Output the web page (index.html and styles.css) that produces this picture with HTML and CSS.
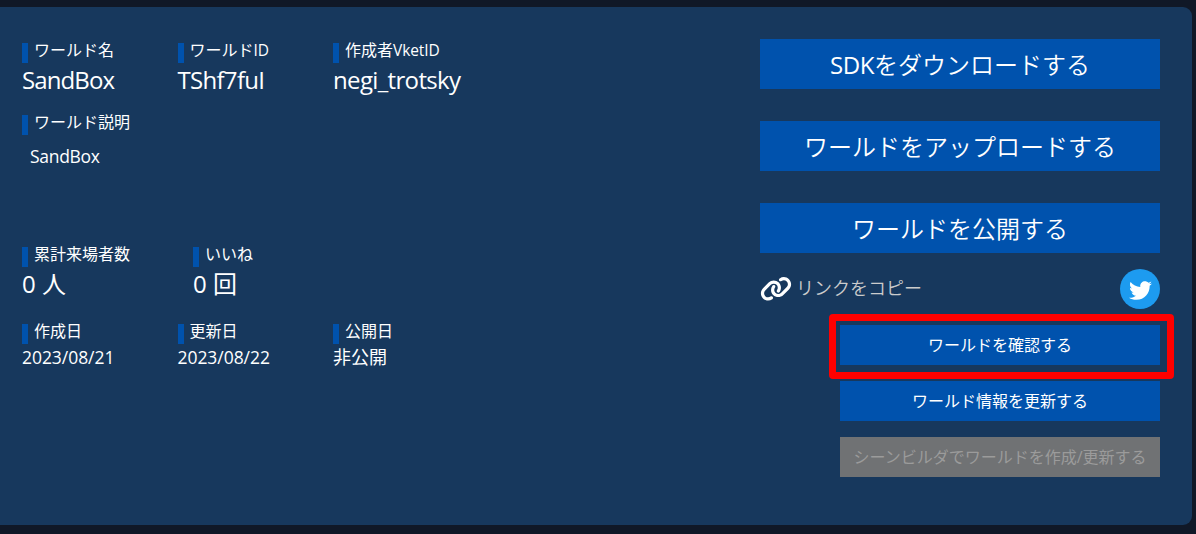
FILE: index.html
```html
<!DOCTYPE html>
<html lang="ja">
<head>
<meta charset="utf-8">
<title>SandBox</title>
<link rel="stylesheet" href="styles.css">
</head>
<body>
<main class="panel">
  <section class="info">
    <div class="row row-names">
      <div class="field"><h2 class="label">ワールド名</h2><p class="value name-value">SandBox</p></div>
      <div class="field"><h2 class="label">ワールド<span class="latin">ID</span></h2><p class="value id-value">TShf7fuI</p></div>
      <div class="field"><h2 class="label">作成者<span class="latin">VketID</span></h2><p class="value author-value">negi_trotsky</p></div>
    </div>
    <div class="row row-description">
      <div class="field"><h2 class="label">ワールド説明</h2><p class="description">SandBox</p></div>
    </div>
    <div class="row row-counts">
      <div class="field"><h2 class="label">累計来場者数</h2><p class="value count">0 人</p></div>
      <div class="field"><h2 class="label">いいね</h2><p class="value count">0 回</p></div>
    </div>
    <div class="row row-dates">
      <div class="field"><h2 class="label">作成日</h2><p class="date">2023/08/21</p></div>
      <div class="field"><h2 class="label">更新日</h2><p class="date">2023/08/22</p></div>
      <div class="field"><h2 class="label">公開日</h2><p class="date unpublished">非公開</p></div>
    </div>
  </section>
  <section class="actions">
    <button class="btn btn-large"><span class="sdk">SDK</span>をダウンロードする</button>
    <button class="btn btn-large">ワールドをアップロードする</button>
    <button class="btn btn-large">ワールドを公開する</button>
    <div class="share">
      <a class="copy">
        <svg class="link-icon" viewBox="0 0 640 512"><path fill="currentColor" d="M579.8 267.7c56.5-56.5 56.5-148 0-204.5c-50-50-128.8-56.5-186.3-15.4l-1.6 1.1c-14.4 10.3-17.7 30.3-7.4 44.6s30.3 17.7 44.6 7.4l1.6-1.1c32.1-22.9 76-19.3 103.8 8.6c31.5 31.5 31.5 82.5 0 114L422.3 334.8c-31.5 31.5-82.5 31.5-114 0c-27.9-27.9-31.5-71.8-8.6-103.8l1.1-1.6c10.3-14.4 6.9-34.4-7.4-44.6s-34.4-6.9-44.6 7.4l-1.1 1.6C206.5 251.2 213 330 263 380c56.5 56.5 148 56.5 204.5 0L579.8 267.7zM60.2 244.3c-56.5 56.5-56.5 148 0 204.5c50 50 128.8 56.5 186.3 15.4l1.6-1.1c14.4-10.3 17.7-30.3 7.4-44.6s-30.3-17.7-44.6-7.4l-1.6 1.1c-32.1 22.9-76 19.3-103.8-8.6C74 372 74 321 105.5 289.5L217.7 177.2c31.5-31.5 82.5-31.5 114 0c27.9 27.9 31.5 71.8 8.6 103.9l-1.1 1.6c-10.3 14.4-6.9 34.4 7.4 44.6s34.4 6.9 44.6-7.4l1.1-1.6C433.5 260.8 427 182 377 132c-56.5-56.5-148-56.5-204.5 0L60.2 244.3z"/></svg>
        <span>リンクをコピー</span>
      </a>
      <a class="twitter">
        <svg class="twitter-icon" viewBox="0 0 512 512"><path fill="currentColor" d="M459.37 151.716c.325 4.548.325 9.097.325 13.645 0 138.72-105.583 298.558-298.558 298.558-59.452 0-114.68-17.219-161.137-47.106 8.447.974 16.568 1.299 25.34 1.299 49.055 0 94.213-16.568 130.274-44.832-46.132-.975-84.792-31.188-98.112-72.772 6.498.974 12.995 1.624 19.818 1.624 9.421 0 18.843-1.3 27.614-3.573-48.081-9.747-84.143-51.98-84.143-102.985v-1.299c13.969 7.797 30.214 12.67 47.431 13.319-28.264-18.843-46.781-51.005-46.781-87.391 0-19.492 5.197-37.36 14.294-52.954 51.655 63.675 129.3 105.258 216.365 109.807-1.624-7.797-2.599-15.918-2.599-24.04 0-57.828 46.782-104.934 104.934-104.934 30.213 0 57.502 12.67 76.67 33.137 23.715-4.548 46.456-13.32 66.599-25.34-7.798 24.366-24.366 44.833-46.132 57.827 21.117-2.273 41.584-8.122 60.426-16.243-14.292 20.791-32.161 39.308-52.628 54.253z"/></svg>
      </a>
    </div>
    <div class="small-actions">
      <div class="highlighted"><button class="btn btn-small">ワールドを確認する</button></div>
      <button class="btn btn-small">ワールド情報を更新する</button>
      <button class="btn btn-small btn-disabled" disabled>シーンビルダでワールドを作成/更新する</button>
    </div>
  </section>
</main>
</body>
</html>
```

FILE: styles.css
```css
* {
  box-sizing: border-box;
}

body {
  margin: 0;
  padding: 7px 4px 9px 0;
  height: 534px;
  overflow: hidden;
  background: #101827;
  color: #fff;
  font-family: "Open Sans", "Noto Sans CJK JP", sans-serif;
}

h2,
p {
  margin: 0;
  font-weight: 400;
  white-space: nowrap;
}

.panel {
  display: flex;
  justify-content: space-between;
  height: 518px;
  padding: 32px 32px 0 22px;
  background: #17385d;
  border-radius: 0 9px 9px 0;
}

.row {
  display: grid;
  grid-template-columns: 155.5px 155.5px 160px;
}

.row-names {
  height: 72px;
}

.row-description {
  height: 132px;
}

.row-counts {
  height: 77px;
  grid-template-columns: 171px 171px;
}

.label {
  display: flex;
  align-items: flex-end;
  height: 24px;
  font-size: 16px;
  line-height: 26px;
}

.label::before {
  content: "";
  flex: none;
  width: 6px;
  height: 20px;
  margin-right: 6px;
  background: #0052ad;
}

.latin {
  font-size: 15.5px;
  letter-spacing: -0.1px;
}

.value {
  font-size: 24px;
  line-height: 34px;
}

.name-value {
  letter-spacing: -0.9px;
}

.id-value {
  letter-spacing: -0.7px;
}

.author-value {
  letter-spacing: -0.65px;
}

.date {
  font-size: 17.5px;
  line-height: 26px;
  letter-spacing: -0.05px;
}

.unpublished {
  font-size: 18px;
  letter-spacing: 0;
}

.description {
  padding: 8px 0 0 8px;
  font-size: 17.5px;
  line-height: 26px;
  letter-spacing: -0.3px;
}

.actions {
  display: flex;
  flex-direction: column;
  width: 400px;
}

.btn {
  display: block;
  flex: none;
  border: 0;
  padding: 0;
  background: #0052ad;
  color: #fff;
  font-family: inherit;
  text-align: center;
  white-space: nowrap;
}

.btn-large {
  width: 400px;
  height: 50px;
  margin-bottom: 32px;
  padding-top: 1px;
  font-size: 24px;
  line-height: 49px;
  font-weight: 350;
}

.btn-large:nth-of-type(3) {
  margin-bottom: 16px;
}

.sdk {
  font-weight: 400;
  letter-spacing: -0.4px;
}

.share {
  display: flex;
  justify-content: space-between;
  align-items: center;
  height: 40px;
}

.copy {
  display: flex;
  align-items: center;
  gap: 4px;
  color: #fff;
  font-size: 18px;
  line-height: 24px;
  font-weight: 350;
}

.copy span {
  padding-bottom: 2px;
  color: #ccc;
}

.link-icon {
  width: 32px;
  height: 25.6px;
}

.twitter {
  display: grid;
  place-items: center;
  width: 40px;
  height: 40px;
  border-radius: 50%;
  background: #1d9bf0;
}

.twitter-icon {
  width: 23px;
  height: 23px;
  margin-top: 2px;
}

.small-actions {
  display: flex;
  flex-direction: column;
  align-items: flex-end;
  gap: 16px;
  padding-top: 16px;
}

.btn-small {
  width: 320px;
  height: 40px;
  font-size: 16px;
  line-height: 40px;
}

.btn-disabled {
  background: #707274;
  color: #9b9b9b;
}

.highlighted {
  position: relative;
}

/* Red marker frame drawn over the button's surroundings */
.highlighted::after {
  content: "";
  position: absolute;
  inset: -11.5px -13.5px -13.5px -11.5px;
  border: 7.5px solid #f00;
  border-radius: 4px;
  pointer-events: none;
}
```
